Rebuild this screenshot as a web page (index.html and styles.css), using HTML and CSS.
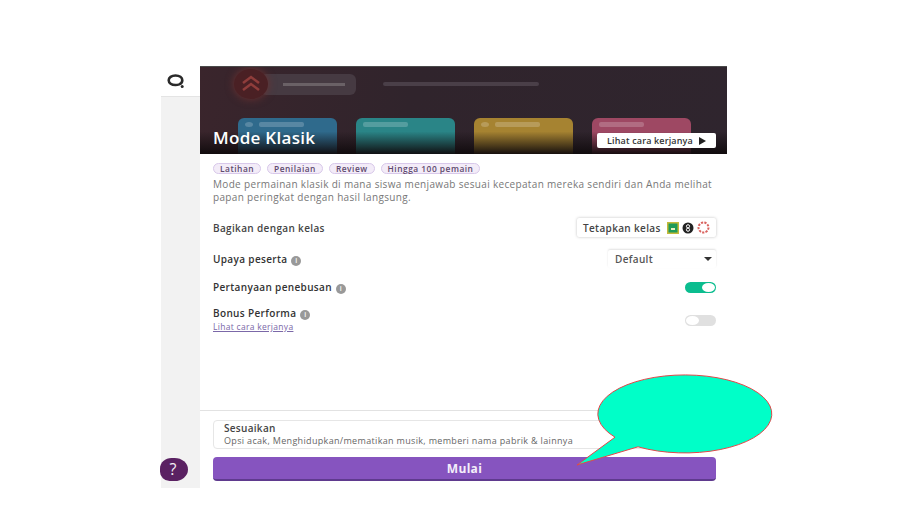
FILE: index.html
```html
<!DOCTYPE html>
<html lang="id">
<head>
    <meta charset="UTF-8">
    <meta name="viewport" content="width=device-width, initial-scale=1.0">
    <title>Mode Klasik</title>
    <link rel="stylesheet" href="styles.css">
</head>
<body>
<div class="frame">
    <div class="rail">
        <div class="rail-logo">
            <svg width="20" height="16" viewBox="0 0 20 16"><path d="M9.500 2.500c-4 0-6.800 2-6.800 4.800s2.800 4.700 6.800 4.700c1.300 0 2.600-.2 3.700-.6 2-.8 3.100-2.300 3.100-4.100 0-2.800-2.800-4.800-6.800-4.800z" fill="none" stroke="#2a2a2a" stroke-width="2.600"/><circle cx="16.200" cy="13.600" r="1.500" fill="#2a2a2a"/></svg>
        </div>
        <div class="help">?</div>
    </div>
    <div class="main">
        <div class="hero">
            <div class="hero-top">
                <div class="hero-badge">
                    <svg width="24" height="20" viewBox="0 0 24 20"><path d="M4 9l8-6 8 6M4 16l8-6 8 6" fill="none" stroke="#8f3d3b" stroke-width="2.500"/></svg>
                </div>
                <div class="hero-pill"><span class="hero-line"></span></div>
                <span class="hero-bar"></span>
            </div>
            <div class="hero-cards">
                <div class="card card-blue"><span class="card-dot"></span><span class="card-line"></span></div>
                <div class="card card-teal"><span class="card-line"></span></div>
                <div class="card card-gold"><span class="card-dot"></span><span class="card-line"></span></div>
                <div class="card card-red"><span class="card-line"></span></div>
            </div>
            <div class="hero-fade"></div>
            <h1>Mode Klasik</h1>
            <button class="how-btn">Lihat cara kerjanya <span class="play"></span></button>
        </div>
        <div class="body">
            <div class="tags">
                <span class="tag">Latihan</span>
                <span class="tag">Penilaian</span>
                <span class="tag">Review</span>
                <span class="tag">Hingga 100 pemain</span>
            </div>
            <p class="desc">Mode permainan klasik di mana siswa menjawab sesuai kecepatan mereka sendiri dan Anda melihat papan peringkat dengan hasil langsung.</p>

            <div class="row row-share">
                <span class="label label-light">Bagikan dengan kelas</span>
                <button class="class-btn">Tetapkan kelas
                    <svg width="12" height="12" viewBox="0 0 12 12"><rect width="12" height="12" fill="#c4b93a"/><rect x="1.500" y="1.500" width="9" height="9" fill="#1f9a57"/><rect x="4" y="6" width="4" height="2" fill="#e8efc0"/></svg>
                    <svg width="12" height="12" viewBox="0 0 12 12"><circle cx="6" cy="6" r="5.500" fill="#222"/><circle cx="6" cy="4.300" r="1.600" fill="none" stroke="#fff"/><circle cx="6" cy="7.700" r="1.600" fill="none" stroke="#fff"/></svg>
                    <svg width="13" height="13" viewBox="0 0 13 13"><circle cx="6.500" cy="6.500" r="5" fill="none" stroke="#d9635f" stroke-width="2" stroke-dasharray="2.200 1.200"/></svg>
                </button>
            </div>
            <div class="row row-effort">
                <span class="label">Upaya peserta <i class="info">i</i></span>
                <div class="select">Default <span class="caret"></span></div>
            </div>
            <div class="row row-redeem">
                <span class="label">Pertanyaan penebusan <i class="info">i</i></span>
                <span class="toggle on"><span class="knob"></span></span>
            </div>
            <div class="row row-bonus">
                <div>
                    <span class="label">Bonus Performa <i class="info">i</i></span>
                    <a class="link">Lihat cara kerjanya</a>
                </div>
                <span class="toggle"><span class="knob"></span></span>
            </div>
        </div>
        <div class="footer">
            <div class="customize">
                <div class="customize-title">Sesuaikan</div>
                <div class="customize-sub">Opsi acak, Menghidupkan/mematikan musik, memberi nama pabrik &amp; lainnya</div>
            </div>
            <button class="start">Mulai</button>
        </div>
    </div>
</div>

<!-- callout drawn over the page -->
<svg class="callout" width="200" height="100" viewBox="0 0 200 100">
    <path d="M39 63.200A87 39 0 1 1 62 72.800L1 91Z" fill="#00ffc8" stroke="#e0484a" stroke-width="1"/>
</svg>
</body>
</html>
```

FILE: styles.css
```css
* {
    box-sizing: border-box;
}
body {
    margin: 0;
    height: 506px;
    padding: 66px 0 0 161px;
    background-color: #ffffff;
    font-family: "Open Sans", "Noto Sans", sans-serif;
    overflow: hidden;
}
.frame {
    display: flex;
    width: 566px;
    height: 422px;
}
.rail {
    position: relative;
    width: 39px;
    flex-shrink: 0;
    background-color: #f2f2f2;
}
.rail-logo {
    display: flex;
    align-items: center;
    padding-left: 5px;
    height: 31px;
    background-color: #ffffff;
    border-bottom: 1px solid #e4e4e4;
}
.help {
    position: absolute;
    left: -1px;
    top: 392px;
    width: 28px;
    height: 23px;
    padding-right: 2px;
    border-radius: 12px 14px 14px 10px / 11px 12px 12px 10px;
    background-color: #5a2162;
    color: #f4f0f5;
    font-size: 16px;
    font-weight: 500;
    line-height: 23px;
    text-align: center;
}
.main {
    display: flex;
    flex-direction: column;
    flex: 1;
    background-color: #ffffff;
}

/* hero */
.hero {
    position: relative;
    height: 88px;
    overflow: hidden;
    background: linear-gradient(100deg, #3a252c 0%, #30242c 40%, #2f252e 100%);
    border-top: 1px solid #4a4a4a;
}
.hero-top {
    display: flex;
    align-items: center;
    padding: 2px 0 0 34px;
}
.hero-badge {
    display: flex;
    align-items: center;
    justify-content: center;
    width: 34px;
    height: 30px;
    border-radius: 50%;
    background-color: #4a2024;
    box-shadow: 0 0 8px #6e3232;
    position: relative;
    z-index: 1;
}
.hero-pill {
    display: flex;
    align-items: center;
    width: 96px;
    height: 21px;
    margin-left: -8px;
    padding-left: 23px;
    border-radius: 6px;
    background-color: #463a42;
}
.hero-line {
    width: 62px;
    height: 3px;
    background-color: #6a6166;
}
.hero-bar {
    width: 156px;
    height: 4px;
    margin-left: 27px;
    border-radius: 2px;
    background-color: #4a3f48;
}
.hero-cards {
    display: flex;
    gap: 19px;
    margin-top: 19px;
    padding-left: 38px;
}
.card {
    display: flex;
    gap: 6px;
    width: 99px;
    height: 50px;
    padding: 4px 7px;
    border-radius: 6px;
}
.card-dot {
    width: 8px;
    height: 5px;
    border-radius: 50%;
    background-color: rgba(255,255,255,0.2);
}
.card-line {
    display: block;
    width: 45px;
    height: 5px;
    border-radius: 2px;
    background-color: rgba(255,255,255,0.2);
}
.card-blue { background-color: #2f6a8c; }
.card-teal { background-color: #2a8587; }
.card-gold { background-color: #a68331; }
.card-red { background-color: #9e4863; }
.hero-fade {
    position: absolute;
    left: 0;
    right: 0;
    bottom: 0;
    height: 30px;
    background: linear-gradient(to bottom, rgba(15,10,12,0) 25%, rgba(15,10,12,0.95));
}
h1 {
    position: absolute;
    left: 13px;
    top: 60px;
    margin: 0;
    color: #ffffff;
    font-size: 17px;
    font-weight: 600;
    line-height: 22px;
    letter-spacing: 0.3px;
}
.how-btn {
    position: absolute;
    right: 11px;
    top: 66px;
    display: flex;
    align-items: center;
    gap: 6px;
    width: 119px;
    height: 15px;
    padding: 0 0 0 10px;
    border: none;
    border-radius: 2px;
    background-color: #ffffff;
    color: #333;
    font-family: inherit;
    font-size: 9px;
    font-weight: 600;
    letter-spacing: 0.15px;
}
.play {
    border-left: 7px solid #222;
    border-top: 4px solid transparent;
    border-bottom: 4px solid transparent;
}

/* settings */
.body {
    flex: 1;
    padding: 9px 11px 0 13px;
}
.tags {
    display: flex;
    gap: 6px;
}
.tag {
    height: 11px;
    padding: 0 6px;
    border: 1px solid #d8c8ea;
    border-radius: 6px;
    background-color: #f3ecf8;
    color: #5e4a6e;
    font-size: 8.400px;
    font-weight: 600;
    line-height: 9px;
    letter-spacing: 0.5px;
}
.desc {
    margin: 4px 0 0;
    color: #777;
    font-size: 10px;
    line-height: 13px;
    letter-spacing: 0.33px;
}
.row {
    display: flex;
    align-items: center;
    justify-content: space-between;
}
.row-share {
    margin-top: 14px;
    height: 19px;
}
.row-effort {
    margin-top: 13px;
    height: 18px;
}
.row-redeem {
    margin-top: 11px;
    height: 16px;
}
.row-bonus {
    margin-top: 5px;
    align-items: flex-start;
}
.row-bonus .toggle {
    margin-top: 15px;
}
.label {
    color: #333;
    font-size: 10px;
    font-weight: 600;
    letter-spacing: 0.35px;
}
.label-light {
    color: #444;
}
.info {
    display: inline-block;
    width: 10px;
    height: 10px;
    margin-left: 1px;
    border-radius: 50%;
    background-color: #999;
    color: #fff;
    font-size: 7px;
    font-style: normal;
    line-height: 10px;
    text-align: center;
    vertical-align: 0;
}
.link {
    display: block;
    margin-top: -1px;
    color: #7b68a8;
    font-size: 8.500px;
    text-decoration: underline;
    letter-spacing: 0.3px;
}
.class-btn {
    display: flex;
    align-items: center;
    gap: 3px;
    width: 139px;
    height: 19px;
    padding: 0 0 0 6px;
    border: none;
    border-radius: 2px;
    background-color: #fff;
    box-shadow: 0 0 3px rgba(0,0,0,0.25);
    color: #444;
    font-family: inherit;
    font-size: 10px;
    font-weight: 600;
    letter-spacing: 0.35px;
}
.class-btn svg:first-of-type {
    margin-left: 3px;
}
.select {
    display: flex;
    align-items: center;
    justify-content: space-between;
    width: 108px;
    height: 18px;
    padding: 0 4px 0 7px;
    border-radius: 2px;
    box-shadow: 0 -1px 2px rgba(0,0,0,0.12);
    color: #555;
    font-size: 10px;
    font-weight: 600;
    letter-spacing: 0.35px;
}
.caret {
    border-top: 4px solid #333;
    border-left: 4px solid transparent;
    border-right: 4px solid transparent;
}
.toggle {
    display: flex;
    align-items: center;
    width: 31px;
    height: 11px;
    padding: 1px;
    border-radius: 6px;
    background-color: #e0e0e0;
}
.toggle .knob {
    width: 13px;
    height: 9px;
    border-radius: 50%;
    background-color: #fff;
}
.toggle.on {
    justify-content: flex-end;
    background-color: #0bbd8f;
}

/* footer */
.footer {
    height: 78px;
    padding: 9px 11px 0 13px;
    border-top: 1px solid #e2e2e2;
}
.customize {
    height: 29px;
    padding: 0 10px;
    border: 1px solid #e6e6e6;
    border-radius: 4px;
}
.customize-title {
    color: #444;
    font-size: 10px;
    font-weight: 600;
    line-height: 14px;
    letter-spacing: 0.3px;
}
.customize-sub {
    color: #666;
    font-size: 9px;
    line-height: 12px;
    letter-spacing: 0.33px;
}
.start {
    display: block;
    width: 100%;
    height: 24px;
    margin-top: 8px;
    border: none;
    border-bottom: 2px solid #5f3a8e;
    border-radius: 4px;
    background-color: #8654bf;
    color: #f4eefa;
    font-family: inherit;
    font-size: 12px;
    font-weight: 700;
    letter-spacing: 0.3px;
}

/* callout over the page */
.callout {
    position: absolute;
    left: 576px;
    top: 374px;
}
```
